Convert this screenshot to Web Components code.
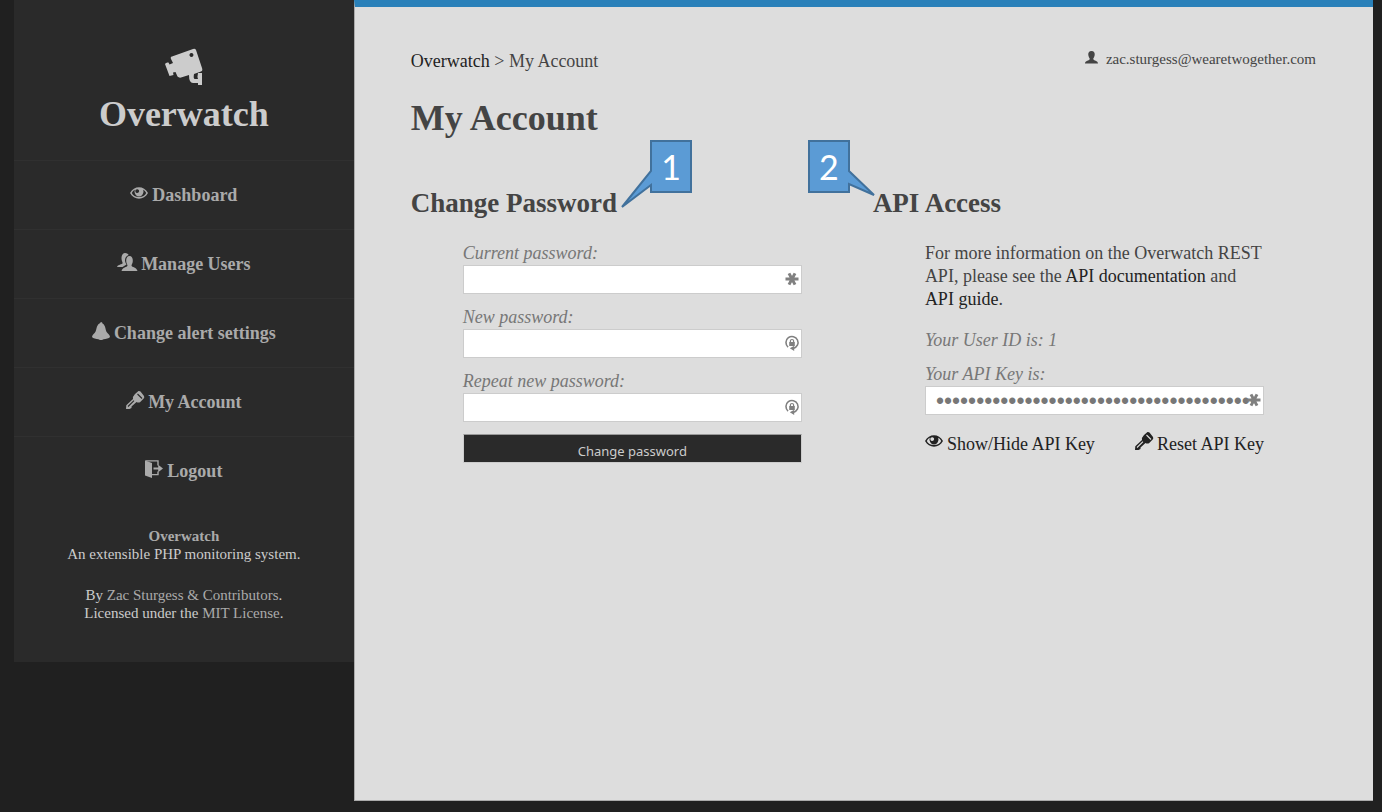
<!DOCTYPE html>
<html lang="en">
<head>
<meta charset="utf-8">
<meta name="viewport" content="width=device-width, initial-scale=1">
<title>Overwatch - My Account</title>
<style>
html{background:#202020}
body{margin:0;font:18px/23px "Liberation Serif","Times New Roman",serif;color:#444}
</style>
</head>
<body>
<ow-app>
  <ow-sidebar slot="side">
    <ow-nav-item icon="eye">Dashboard</ow-nav-item>
    <ow-nav-item icon="users">Manage Users</ow-nav-item>
    <ow-nav-item icon="bell">Change alert settings</ow-nav-item>
    <ow-nav-item icon="key">My Account</ow-nav-item>
    <ow-nav-item icon="logout">Logout</ow-nav-item>
  </ow-sidebar>
  <ow-topbar user="zac.sturgess@wearetwogether.com">My Account</ow-topbar>
  <ow-columns>
    <ow-section heading="Change Password" step="1" side="right"><ow-password-form></ow-password-form></ow-section>
    <ow-section heading="API Access" step="2" side="left"><ow-api-access></ow-api-access></ow-section>
  </ow-columns>
</ow-app>
<script>
const ICONS = {
  camera: ['0 0 38 38', '<path fill-rule="evenodd" d="M7 8.500Q5 9 6 11L8 15 4.500 16.500 3.500 14.500Q1 14 0 16L4.500 28 8.500 27 8 24.500 10.500 24 12.500 28.500Q14 30 16 29.500L24 27Q24 35 28 35H33V37H37V25H33Q32 29 33 31H30Q28 31 29 26L36 23.500Q38 22.500 37 20L31 2Q30 0 28 1ZM26.500 5A2 2 0 1 1 26.400 5Z"/>'],
  eye: ['0 0 18 12', '<path fill-rule="evenodd" d="M0 6C4 -1.800 14 -1.800 18 6 14 13.500 4 13.500 0 6ZM1.800 6C3 8.500 5.500 10 9 10S15 8.500 16.200 6C15.500 4.500 14.500 3.400 13.200 2.700A5.200 5.200 0 0 1 9 9.600 5.200 5.200 0 0 1 4.800 2.700C3.500 3.400 2.500 4.500 1.800 6ZM7.500 2.200A1.900 1.900 0 1 0 8.500 5.500 1.900 1.900 0 0 0 7.500 2.200Z"/>'],
  users: ['0 0 20 18', '<path d="M8 0C10 0 11.500 1 11.500 2 9 3 8 5 8 7.500 8 9 9 10.500 9.500 11.500L5.500 14H0C1 11.500 3.500 12 5.500 10.500 6 9.500 4.500 8 4.500 5.500 4.500 2 6 0 8 0Z"/><path d="M12.500 3C14.700 3 16 5 15.800 8 15.800 10.500 14.500 11.500 14.500 12.500 15 14.500 19.500 14 20.500 18H4.500C5.500 14 10 14.500 10.500 12.500 10.500 11.500 9.200 10.500 9.200 8 9 5 10.300 3 12.500 3Z"/>'],
  bell: ['0 0 18 18', '<path fill-rule="evenodd" d="M9 0Q10.500 0 10.500 1.500C14 3.500 13 8 15 10.500 16 12 18 13 18 15 17 16.500 14 17 11.500 17.200 11 18.300 7 18.300 6.500 17.200 4 17 1 16.500 0 15 0 13 2 12 3 10.500 5 8 4 3.500 7.500 1.500 7.500 0 9 0ZM2 14.200C3 15.600 5 15.600 6.500 15.800 7 14.600 11 14.600 11.500 15.800 13 15.600 15 15.600 16 14.200 12 12.600 6 12.600 2 14.200Z"/>'],
  key: ['0 0 18 18', '<path d="M9 3 12.500 0Q13.500 -.3 14.500 .5L18 5Q18.700 6.500 17.700 7.500L14 11.300Q12 12 10.500 11L5.500 15.500V17L3.500 18H0L.3 14.300 7 8Q6.500 5.500 9 3Z"/><path fill="none" stroke="var(--hole)" stroke-width="1.100" d="m11.500 3 4.500 4.500M2 15.500 8 9.700"/>'],
  logout: ['0 0 18 18', '<path d="M0 .5 7 3V18L0 15.500Z"/><path fill="none" stroke="currentColor" stroke-width="1.400" d="M.5 .9H13V5.500M13 11.500V14.600H7"/><path d="M8.500 7.600H13.200V4.800L18 8.500 13.200 12.200V9.500H8.500Z"/>'],
  user: ['0 0 13 13', '<path d="M6.500 0C9 0 10 1.700 9.700 4 9.500 6 8.300 7 8.200 8 8.500 9.700 13 9.500 13 12.500H0C0 9.500 4.500 9.700 4.800 8 4.700 7 3.500 6 3.300 4 3 1.700 4 0 6.500 0Z"/>'],
  star: ['0 0 14 14', '<path fill="none" stroke="currentColor" stroke-width="3" d="M.5 7H13.500M4 1.400 10 12.600M10 1.400 4 12.600"/>'],
  renew: ['0 0 16 16', '<path fill="none" stroke="currentColor" stroke-width="1.800" d="M3.500 12.700A6.900 6.900 0 1 1 9.500 14.200"/><path d="M10.500 11V17L5.500 14ZM4.800 6.800H11.200V11.500H4.800Z"/><path fill="none" stroke="currentColor" stroke-width="1.400" d="M6.200 7V5.500Q6.200 4 8 4T9.800 5.500V7"/>']
};

function element(name, build) {
  customElements.define(name, class extends HTMLElement {
    connectedCallback() {
      if (this.shadowRoot) return;
      const t = document.createElement('template');
      t.innerHTML = build(this);
      this.attachShadow({mode: 'open'}).append(t.content);
    }
  });
}

const linkCss = 'a{color:inherit;text-decoration:none}a:hover{text-decoration:underline}';

element('ow-icon', el => {
  const [box, body] = ICONS[el.getAttribute('name')];
  return `<style>:host{display:inline-block;width:18px;height:18px}svg{display:block;width:100%;height:100%;overflow:visible}</style>
  <svg viewBox="${box}" fill="currentColor" aria-hidden="true">${body}</svg>`;
});

element('ow-app', () => `<style>
  :host{display:grid;grid-template-columns:1fr 3fr;align-items:start;padding:0 9px 11px 14px;min-height:100vh;box-sizing:border-box}
  main{align-self:stretch;box-sizing:border-box;background:#ddd;border-top:7px solid #2980b9;border-bottom:1px solid #aaa;border-left:1px solid #aaa;padding:43px 57px 40px 56px}
  </style><slot name="side"></slot><main><slot></slot></main>`);

element('ow-sidebar', () => `<style>
  :host{display:block;background:#2a2a2a;color:#ccc;text-align:center}
  header{padding:48px 0 25px}
  header ow-icon{width:38px;height:38px}
  h1{margin:1px 0 0;font-size:36px;line-height:42px}
  footer{padding:22px 16px 40px;font-size:15px;line-height:18px}
  p{margin:0 0 23px}p:last-child{margin:0}
  ${linkCss} a{color:#aaa}
  </style>
  <header><ow-icon name="camera"></ow-icon><h1>Overwatch</h1></header>
  <nav><slot></slot></nav>
  <footer><p><a href="#"><b>Overwatch</b></a><br>An extensible PHP monitoring system.</p>
  <p>By <a href="#">Zac Sturgess</a> <a href="#">&amp; Contributors</a>.<br>Licensed under the <a href="#">MIT License</a>.</p></footer>`);

element('ow-nav-item', el => `<style>
  :host{display:block;border-top:1px solid #303030;--hole:#2a2a2a}
  a{display:flex;justify-content:center;align-items:center;gap:4px;height:68px;color:#aaa;font-weight:bold;text-decoration:none}
  ow-icon{margin-bottom:4px}
  ow-icon[name=users]{width:20px}
  </style><a href="#"><ow-icon name="${el.getAttribute('icon')}"></ow-icon><slot></slot></a>`);

element('ow-topbar', el => `<style>
  :host{display:block}
  div{display:flex;justify-content:space-between;align-items:flex-start}
  .user{display:flex;gap:8px;font-size:15px;line-height:18px}
  .user ow-icon{width:13px;height:13px;margin-top:1px}
  h1{margin:24px 0 0;font-size:36px;line-height:42px}
  ${linkCss} nav a{color:#222}
  </style>
  <div><nav aria-label="Breadcrumb"><a href="#">Overwatch</a> &gt; <slot></slot></nav>
  <span class="user"><ow-icon name="user"></ow-icon>${el.getAttribute('user')}</span></div>
  <h1>${el.textContent}</h1>`);

element('ow-columns', () => `<style>
  :host{display:grid;grid-template-columns:1fr 1fr;gap:19px;margin-top:42px}
  </style><slot></slot>`);

element('ow-section', el => `<style>
  :host{display:block}
  h2{position:relative;display:inline-block;margin:0;font-size:27px;line-height:44px}
  ow-callout{position:absolute;top:-41px}
  ow-callout[side=right]{left:100%}
  ow-callout[side=left]{right:100%}
  .body{padding:17px 52px 0}
  </style><h2>${el.getAttribute('heading')}<ow-callout side="${el.getAttribute('side')}">${el.getAttribute('step')}</ow-callout></h2>
  <div class="body"><slot></slot></div>`);

element('ow-callout', el => {
  const right = el.getAttribute('side') === 'right';
  const d = right ? 'M34 1H74V52H34V45L5 67 34 31Z' : 'M1 1H41V31L66 55 41 44V52H1Z';
  return `<style>
  :host{display:block;width:${right ? 75 : 65}px;height:68px}
  svg{display:block;overflow:visible}
  span{position:absolute;top:0;${right ? 'right:0' : 'left:0'};width:42px;line-height:53px;text-align:center;font-family:Lato,sans-serif;font-size:34px;font-weight:400;color:#fff}
  </style><svg width="75" height="68" aria-hidden="true"><path d="${d}" fill="#5b9bd5" stroke="#41719c" stroke-width="2"/></svg><span><slot></slot></span>`;
});

element('ow-field', el => `<style>
  :host{display:block}
  label{display:block;font-style:italic;color:#777;line-height:23px}
  div{position:relative}
  input{display:block;box-sizing:border-box;width:100%;height:29px;margin:0;border:1px solid #ccc;border-radius:0;background:#fff;padding:2px 10px 0;font:23px/25px "Liberation Sans",sans-serif;color:#777}
  ow-icon{position:absolute;right:3px;top:7px;width:14px;height:14px;color:#808080}
  </style><label for="f">${el.getAttribute('label')}</label>
  <div><input id="f" type="password" value="${el.getAttribute('value') || ''}"><ow-icon name="${el.getAttribute('icon')}"></ow-icon></div>`);

element('ow-password-form', () => `<style>
  :host{display:block}
  form{display:grid;gap:12px}
  button{box-sizing:border-box;width:100%;height:29px;margin:0;border:1px solid #ccc;border-top-color:#999;background:#2a2a2a;color:#ccc;padding:5px 0 0;font:13px/20px "Noto Sans",sans-serif}
  </style><form>
  <ow-field label="Current password:" icon="star"></ow-field>
  <ow-field label="New password:" icon="renew"></ow-field>
  <ow-field label="Repeat new password:" icon="renew"></ow-field>
  <button type="button">Change password</button></form>`);

element('ow-api-access', () => `<style>
  :host{display:block;color:#444;--hole:#ddd}
  p{margin:0 0 18px}
  .id{margin-bottom:11px;font-style:italic;color:#777}
  .actions{display:flex;justify-content:space-between;margin-top:18px}
  .actions a{display:flex;gap:4px}
  .actions ow-icon{margin-top:-1px}
  ${linkCss} a{color:#222}
  </style>
  <p>For more information on the Overwatch REST API, please see the <a href="#">API documentation</a> and <a href="#">API guide</a>.</p>
  <p class="id">Your User ID is: 1</p>
  <ow-field label="Your API Key is:" icon="star" value="0123456789012345678901234567890123456789"></ow-field>
  <div class="actions"><a href="#"><ow-icon name="eye"></ow-icon>Show/Hide API Key</a><a href="#"><ow-icon name="key"></ow-icon>Reset API Key</a></div>`);
</script>
</body>
</html>
